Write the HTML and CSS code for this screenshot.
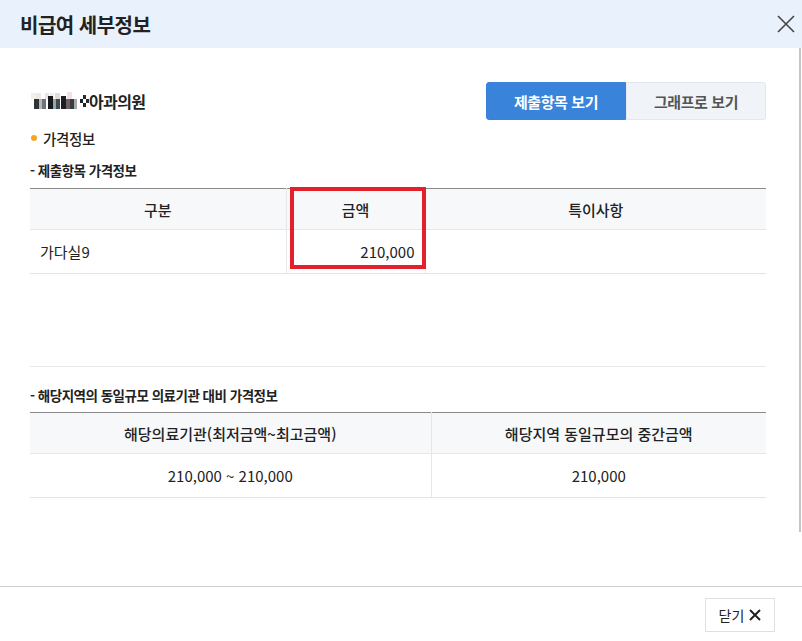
FILE: index.html
```html
<!DOCTYPE html>
<html lang="ko">
<head>
<meta charset="utf-8">
<title>비급여 세부정보</title>
<link rel="stylesheet" href="styles.css">
</head>
<body>
<div class="modal">
  <header class="modal-head">
    <h1 class="modal-title">비급여 세부정보</h1>
    <button class="icon-close" aria-label="닫기">
      <svg width="18" height="18" viewBox="0 0 18 18"><path d="M1 1 L17 17 M17 1 L1 17" stroke="#444" stroke-width="1.6" fill="none"/></svg>
    </button>
  </header>

  <main class="modal-body">
    <div class="top-row">
      <div class="hospital">
        <svg class="blur" width="58" height="18" viewBox="0 0 58 18">
          <rect x="0" y="1" width="5" height="6" fill="#f4efe4"/>
          <rect x="5" y="1" width="5" height="6" fill="#eee9e6"/>
          <rect x="14" y="1" width="4" height="6" fill="#e4e6ea"/>
          <rect x="19" y="1" width="4" height="6" fill="#eeeeee"/>
          <rect x="24" y="1" width="5" height="6" fill="#e3dcd2"/>
          <rect x="36" y="0" width="5" height="7" fill="#f3dfe4"/>
          <rect x="3" y="7" width="5" height="10" fill="#2e3438"/>
          <rect x="8" y="7" width="3" height="10" fill="#b7b7b2"/>
          <rect x="11" y="7" width="4" height="10" fill="#6e7379"/>
          <rect x="17" y="4" width="5" height="13" fill="#17191c"/>
          <rect x="22" y="7" width="3" height="10" fill="#9ca3a6"/>
          <rect x="25" y="7" width="4" height="10" fill="#3e4b54"/>
          <rect x="30" y="4" width="5" height="13" fill="#1b1e22"/>
          <rect x="35" y="7" width="4" height="10" fill="#6a6364"/>
          <rect x="39" y="7" width="4" height="10" fill="#3b3d42"/>
          <rect x="43" y="7" width="3" height="10" fill="#a7a9ab"/>
          <rect x="52" y="3" width="3" height="4" fill="#2a2c30"/>
          <rect x="49" y="7" width="3" height="4" fill="#1e2024"/>
          <rect x="55" y="7" width="3" height="4" fill="#2a2c30"/>
          <rect x="52" y="11" width="3" height="4" fill="#1e2024"/>
        </svg><span class="hospital-name">아과의원</span>
      </div>
      <div class="view-tabs">
        <button class="tab tab-active">제출항목 보기</button>
        <button class="tab">그래프로 보기</button>
      </div>
    </div>

    <div class="bullet-title"><span class="dot"></span>가격정보</div>

    <h2 class="sub-title">- 제출항목 가격정보</h2>
    <div class="table-wrap">
      <table class="grid grid-3">
        <colgroup><col class="c1"><col class="c2"><col class="c3"></colgroup>
        <thead>
          <tr><th>구분</th><th>금액</th><th>특이사항</th></tr>
        </thead>
        <tbody>
          <tr><td class="left">가다실9</td><td class="right">210,000</td><td></td></tr>
        </tbody>
      </table>
      <div class="highlight"></div>
    </div>
    <div class="spacer"></div>

    <h2 class="sub-title second">- 해당지역의 동일규모 의료기관 대비 가격정보</h2>
    <table class="grid grid-2">
      <colgroup><col class="d1"><col class="d2"></colgroup>
      <thead>
        <tr><th>해당의료기관(최저금액~최고금액)</th><th>해당지역 동일규모의 중간금액</th></tr>
      </thead>
      <tbody>
        <tr><td>210,000 ~ 210,000</td><td>210,000</td></tr>
      </tbody>
    </table>
  </main>

  <footer class="modal-foot">
    <button class="close-btn">닫기
      <svg class="x" width="12" height="12" viewBox="0 0 12 12"><path d="M1 1 L11 11 M11 1 L1 11" stroke="#222" stroke-width="2" fill="none"/></svg>
    </button>
  </footer>
  <div class="scroll-thumb"></div>
</div>
</body>
</html>
```

FILE: styles.css
```css
* { box-sizing: border-box; }
html, body { margin: 0; padding: 0; }
body {
  width: 802px;
  height: 641px;
  background: #fff;
  font-family: "Noto Sans CJK KR", "Noto Sans", sans-serif;
  color: #222;
  overflow: hidden;
}
.modal {
  position: relative;
  width: 802px;
  height: 641px;
  display: flex;
  flex-direction: column;
}
.modal-head {
  height: 48px;
  background: #e9f1fc;
  display: flex;
  align-items: center;
  justify-content: space-between;
  padding: 0 6px 0 20px;
  flex-shrink: 0;
}
.modal-title {
  margin: 0;
  font-size: 20px;
  font-weight: 700;
  color: #222;
  letter-spacing: -0.5px;
}
.icon-close {
  border: 0;
  background: none;
  padding: 0;
  width: 20px;
  height: 20px;
  display: flex;
  align-items: center;
  justify-content: center;
}
.modal-body {
  flex: 1;
  padding: 34px 36px 0 30px;
}
.top-row {
  display: flex;
  align-items: center;
  justify-content: space-between;
  height: 38px;
}
.hospital {
  display: flex;
  align-items: center;
  padding-left: 1px;
}
.blur { display: block; }
.hospital-name {
  font-size: 16px;
  font-weight: 700;
  letter-spacing: -0.6px;
}
.view-tabs { display: flex; }
.tab {
  width: 140px;
  height: 38px;
  font-family: inherit;
  font-size: 15px;
  font-weight: 700;
  letter-spacing: -0.4px;
  border: 1px solid #e2e8ee;
  background: #f0f4f8;
  color: #555;
  border-radius: 0 3px 3px 0;
  padding: 0;
}
.tab-active {
  background: #3a83db;
  border-color: #3a83db;
  color: #fff;
  border-radius: 3px 0 0 3px;
}
.bullet-title {
  display: flex;
  align-items: center;
  font-size: 14.5px;
  font-weight: 500;
  height: 20px;
  margin-top: 8px;
  padding-left: 1px;
  letter-spacing: -0.3px;
}
.dot {
  width: 6px;
  height: 6px;
  border-radius: 50%;
  background: #f5a623;
  margin-right: 6px;
}
.sub-title {
  margin: 14px 0 9px;
  height: 17px;
  line-height: 17px;
  font-size: 13.5px;
  font-weight: 700;
  color: #222;
  letter-spacing: -0.5px;
}
.table-wrap { position: relative; }
.grid {
  width: 100%;
  border-collapse: collapse;
  table-layout: fixed;
}
.grid thead tr { border-top: 1px solid #8a8a8a; }
.grid th {
  background: #f7f8fa;
  height: 41px;
  font-size: 15px;
  font-weight: 500;
  color: #222;
  text-align: center;
  border-bottom: 1px solid #e5e7ea;
  border-left: 1px solid #e5e7ea;
  padding: 0;
}
.grid td {
  height: 44px;
  font-size: 15px;
  color: #222;
  text-align: center;
  border-bottom: 1px solid #e2e4e7;
  border-left: 1px solid #e5e7ea;
  padding: 0 10px;
}
.grid th:first-child, .grid td:first-child { border-left: 0; }
.grid td.left { text-align: left; }
.grid td.right { text-align: right; }
.grid-3 .c1 { width: 256px; }
.grid-3 .c2 { width: 139px; }
.grid-2 .d1 { width: 401px; }
.highlight {
  position: absolute;
  left: 260px;
  top: -1px;
  width: 136px;
  height: 82px;
  border: 4px solid #e3202b;
}
.spacer {
  height: 93px;
  border-bottom: 1px solid #e8e8e8;
}
.sub-title.second { margin: 20px 0 8px; }
.modal-foot {
  height: 55px;
  border-top: 1px solid #cfcfcf;
  display: flex;
  align-items: flex-start;
  justify-content: flex-end;
  padding: 11px 27px 0 0;
  flex-shrink: 0;
}
.close-btn {
  height: 34px;
  width: 70px;
  border: 1px solid #e0e0e0;
  background: #fff;
  font-family: inherit;
  font-size: 14px;
  color: #222;
  padding: 0;
  display: flex;
  align-items: center;
  justify-content: center;
  gap: 5px;
}
.close-btn .x { display: block; }
.scroll-thumb {
  position: absolute;
  right: 1px;
  top: 48px;
  width: 2px;
  height: 484px;
  background: #c6c6c6;
}
```
